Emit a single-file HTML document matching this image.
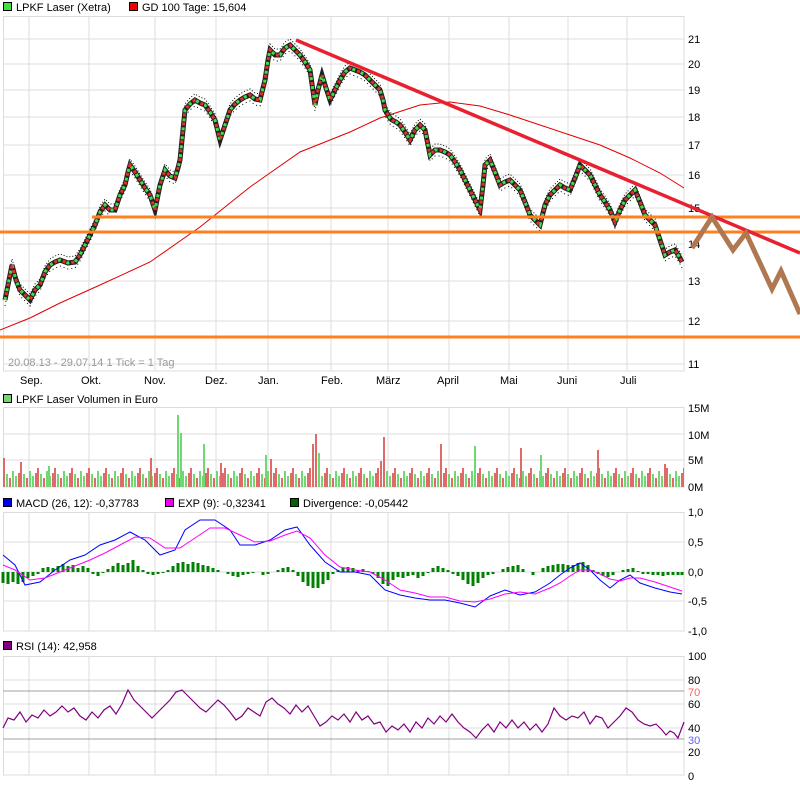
<!DOCTYPE html>
<html><head><meta charset="utf-8"><style>
body{margin:0;background:#fff;width:800px;height:784px;overflow:hidden;font-family:"Liberation Sans",sans-serif;}
svg text{font-family:"Liberation Sans",sans-serif;font-size:11px;fill:#000}
</style></head><body>
<svg width="800" height="784" xmlns="http://www.w3.org/2000/svg">
<defs>
<pattern id="vol" x="3" y="0" width="17" height="487" patternUnits="userSpaceOnUse">
<rect x="0" y="468" width="2" height="19" fill="#e06a6a"/>
<rect x="3" y="474" width="2" height="13" fill="#70d870"/>
<rect x="6" y="478" width="2" height="9" fill="#e06a6a"/>
<rect x="9" y="471" width="2" height="16" fill="#70d870"/>
<rect x="12" y="476" width="2" height="11" fill="#70d870"/>
<rect x="15" y="473" width="2" height="14" fill="#e06a6a"/>
</pattern>
<path id="px" d="M5 300L8 285L12 265L16 280L20 290L25 295L30 300L35 290L40 285L45 272L50 265L55 262L60 260L68 263L75 262L80 255L85 245L90 235L95 225L100 212L105 205L110 210L115 210L120 195L125 185L128 172L130 165L135 172L140 180L145 188L150 195L155 210L160 185L165 170L170 176L175 178L178 168L180 160L183 130L185 110L190 104L195 100L200 103L205 105L210 112L215 120L220 140L225 125L230 110L235 104L240 100L245 97L250 95L255 99L260 100L265 80L268 60L270 50L275 55L280 55L285 48L290 45L295 50L300 55L305 62L310 70L315 105L318 90L322 75L326 88L330 100L335 90L340 80L345 72L350 68L355 70L360 72L365 75L370 80L375 85L380 90L383 100L385 110L390 118L392 120L396 122L400 125L405 132L410 140L415 130L420 125L425 130L428 145L430 155L435 150L440 150L445 152L450 155L455 162L460 170L465 180L470 190L475 200L480 210L483 185L485 165L490 160L495 172L500 185L505 182L510 180L515 185L520 190L525 202L530 215L535 220L540 225L545 205L550 195L555 190L560 185L565 188L570 190L575 178L580 165L585 170L590 175L595 185L600 195L605 202L610 210L615 222L620 210L625 200L630 195L635 190L640 202L645 215L650 220L655 225L660 240L665 255L670 252L675 250L680 258L682 262"/>
</defs>
<rect x="3.5" y="2.5" width="8" height="8" fill="#40e040" stroke="#000"/>
<text x="16" y="11">LPKF Laser (Xetra)</text>
<rect x="129.5" y="2.5" width="8" height="8" fill="#f00000" stroke="#000"/>
<text x="142" y="11">GD 100 Tage: 15,604</text>
<g stroke="#dcdcdc" stroke-width="1">
<path d="M29 16V371M89 16V371M155 16V371M216 16V371M268 16V371M331 16V371M388 16V371M449 16V371M509 16V371M568 16V371M627 16V371"/>
<path d="M3 39H684M3 64H684M3 90H684M3 117H684M3 145H684M3 175H684M3 208H684M3 244H684M3 281H684M3 321H684M3 364H684"/>
</g>
<rect x="3.5" y="16.5" width="680.5" height="354.5" fill="none" stroke="#dcdcdc"/>
<g>
<text x="688" y="43">21</text><text x="688" y="68">20</text><text x="688" y="94">19</text><text x="688" y="121">18</text><text x="688" y="149">17</text><text x="688" y="179">16</text><text x="688" y="212">15</text><text x="688" y="248">14</text><text x="688" y="285">13</text><text x="688" y="325">12</text><text x="688" y="368">11</text>
</g>
<text x="8" y="366" style="fill:#999">20.08.13 - 29.07.14   1 Tick = 1 Tag</text>
<g>
<text x="20" y="384">Sep.</text><text x="81" y="384">Okt.</text><text x="144" y="384">Nov.</text><text x="205" y="384">Dez.</text><text x="258" y="384">Jan.</text><text x="321" y="384">Feb.</text><text x="376" y="384">März</text><text x="437" y="384">April</text><text x="500" y="384">Mai</text><text x="557" y="384">Juni</text><text x="620" y="384">Juli</text>
</g>
<path d="M0 330L30 318L60 303L100 285L150 262L200 227L250 187L300 152L350 132L380 118L420 105L450 102L480 106L510 115L540 125L570 135L600 145L630 158L660 173L684 188" fill="none" stroke="#e00000" stroke-width="1"/>
<use href="#px" fill="none" stroke="#000" stroke-width="1" transform="translate(0,-6)" stroke-dasharray="1 2"/>
<use href="#px" fill="none" stroke="#000" stroke-width="1" transform="translate(0,6)" stroke-dasharray="1 3"/>
<use href="#px" fill="none" stroke="#222" stroke-width="5"/>
<use href="#px" fill="none" stroke="#40e040" stroke-width="3" stroke-dasharray="3 6"/>
<use href="#px" fill="none" stroke="#e03030" stroke-width="3" stroke-dasharray="3 6" stroke-dashoffset="4"/>
<path d="M92 217H800" stroke="#ff8020" stroke-width="3"/>
<path d="M0 232H800" stroke="#ff8020" stroke-width="3"/>
<path d="M0 337H800" stroke="#ff8020" stroke-width="3"/>
<path d="M296 40L800 253" stroke="#e82030" stroke-width="3.5"/>
<path d="M692 248L712 217L733 250L746 233L772 289L781 271L800 314" fill="none" stroke="#b07850" stroke-width="5"/>
<rect x="3.5" y="394.5" width="8" height="8" fill="#70d870" stroke="#000"/>
<text x="16" y="403">LPKF Laser Volumen in Euro</text>
<g stroke="#dcdcdc"><path d="M29 407V487M89 407V487M155 407V487M216 407V487M268 407V487M331 407V487M388 407V487M449 407V487M509 407V487M568 407V487M627 407V487M3 434H684M3 460H684"/></g>
<rect x="3.5" y="407.5" width="680.5" height="79.5" fill="none" stroke="#dcdcdc"/>
<rect x="3" y="407" width="681" height="80" fill="url(#vol)"/>
<g>
<rect x="3" y="458" width="2" height="29" fill="#e06a6a"/><rect x="20" y="462" width="2" height="25" fill="#e06a6a"/><rect x="48" y="466" width="2" height="21" fill="#70d870"/>
<rect x="177" y="415" width="2" height="72" fill="#70d870"/><rect x="180" y="433" width="2" height="54" fill="#70d870"/><rect x="203" y="444" width="2" height="43" fill="#70d870"/>
<rect x="150" y="458" width="2" height="29" fill="#e06a6a"/><rect x="220" y="463" width="2" height="24" fill="#e06a6a"/>
<rect x="312" y="444" width="2" height="43" fill="#e06a6a"/><rect x="315" y="434" width="2" height="53" fill="#e06a6a"/><rect x="318" y="453" width="2" height="34" fill="#70d870"/>
<rect x="383" y="437" width="2" height="50" fill="#e06a6a"/><rect x="380" y="461" width="2" height="26" fill="#e06a6a"/>
<rect x="265" y="455" width="2" height="32" fill="#70d870"/><rect x="270" y="459" width="2" height="28" fill="#e06a6a"/>
<rect x="440" y="444" width="2" height="43" fill="#e06a6a"/><rect x="474" y="446" width="2" height="41" fill="#70d870"/><rect x="520" y="448" width="2" height="39" fill="#e06a6a"/><rect x="540" y="455" width="2" height="32" fill="#70d870"/><rect x="597" y="450" width="2" height="37" fill="#e06a6a"/><rect x="664" y="464" width="2" height="23" fill="#e06a6a"/>
</g>
<text x="688" y="412">15M</text><text x="688" y="439">10M</text><text x="688" y="464">5M</text><text x="688" y="491">0M</text>
<rect x="3.5" y="498.5" width="8" height="8" fill="#0000f0" stroke="#000"/><text x="16" y="507">MACD (26, 12): -0,37783</text>
<rect x="165.5" y="498.5" width="8" height="8" fill="#f000f0" stroke="#000"/><text x="178" y="507">EXP (9): -0,32341</text>
<rect x="290.5" y="498.5" width="8" height="8" fill="#006400" stroke="#000"/><text x="303" y="507">Divergence: -0,05442</text>
<g stroke="#dcdcdc"><path d="M29 512V631M89 512V631M155 512V631M216 512V631M268 512V631M331 512V631M388 512V631M449 512V631M509 512V631M568 512V631M627 512V631M3 542H684M3 572H684M3 601H684"/></g>
<rect x="3.5" y="512.5" width="680.5" height="118.5" fill="none" stroke="#dcdcdc"/>
<path d="M3 572V583M8 572V584M13 572V582M18 572V584M23 572V582M28 572V578M33 572V576M38 572V574M43 572V568M48 572V567M53 572V568M58 572V566M63 572V564M68 572V566M73 572V565M78 572V568M83 572V566M88 572V568M93 572V574M98 572V576M103 572V573M108 572V569M113 572V566M118 572V563M123 572V565M128 572V563M133 572V560M138 572V566M143 572V570M148 572V574M153 572V575M158 572V574M163 572V573M168 572V570M173 572V566M178 572V563M183 572V562M188 572V564M193 572V562M198 572V563M203 572V565M208 572V566M213 572V568M218 572V570M223 572V572M228 572V574M233 572V576M238 572V577M243 572V575M248 572V574M253 572V573M258 572V572M263 572V575M268 572V574M273 572V572M278 572V570M283 572V568M288 572V567M293 572V570M298 572V576M303 572V582M308 572V586M313 572V588M318 572V588M323 572V584M328 572V580M333 572V574M338 572V570M343 572V568M348 572V567M353 572V568M358 572V570M363 572V569M368 572V571M373 572V574M378 572V578M383 572V584M388 572V586M393 572V580M398 572V577M403 572V578M408 572V576M413 572V575M418 572V578M423 572V576M428 572V573M433 572V568M438 572V566M443 572V568M448 572V570M453 572V574M458 572V576M463 572V580M468 572V584M473 572V586M478 572V583M483 572V578M488 572V575M493 572V574M498 572V572M503 572V569M508 572V567M513 572V566M518 572V565M523 572V569M528 572V572M533 572V575M538 572V572M543 572V568M548 572V566M553 572V565M558 572V564M563 572V564M568 572V565M573 572V565M578 572V563M583 572V562M588 572V565M593 572V570M598 572V574M603 572V576M608 572V577M613 572V575M618 572V572M623 572V570M628 572V569M633 572V568M638 572V571M643 572V574M648 572V574M653 572V575M658 572V575M663 572V576M668 572V575M673 572V575M678 572V575M682 572V575" stroke="#008000" stroke-width="3"/>
<path d="M3 555L15 565L25 585L40 582L55 570L70 560L85 555L100 545L115 540L130 532L145 540L160 555L175 550L185 530L200 520L215 520L230 530L240 545L255 545L270 540L285 530L297 527L310 545L325 562L340 572L355 572L370 575L385 590L400 595L415 598L430 600L445 600L460 603L475 607L490 596L505 590L520 595L535 592L550 583L560 575L570 568L580 563L590 570L600 580L610 588L620 580L630 575L640 583L655 588L670 592L682 594" fill="none" stroke="#0000ff" stroke-width="1"/>
<path d="M3 565L15 570L30 580L45 578L60 572L75 566L90 560L105 553L120 545L135 537L150 538L165 548L180 548L195 538L210 528L225 528L240 535L255 542L270 541L285 535L297 531L310 538L325 555L340 567L355 570L370 572L385 580L400 590L415 593L430 597L445 597L460 601L475 602L490 599L505 594L520 592L535 594L550 588L560 583L570 576L580 570L590 570L600 574L610 579L620 581L630 578L640 578L655 582L670 587L682 591" fill="none" stroke="#ff00ff" stroke-width="1"/>
<text x="688" y="516">1,0</text><text x="688" y="546">0,5</text><text x="688" y="576">0,0</text><text x="688" y="605">-0,5</text><text x="688" y="635">-1,0</text>
<rect x="3.5" y="641.5" width="8" height="8" fill="#800080" stroke="#000"/><text x="16" y="650">RSI (14): 42,958</text>
<g stroke="#dcdcdc"><path d="M29 656V775M89 656V775M155 656V775M216 656V775M268 656V775M331 656V775M388 656V775M449 656V775M509 656V775M568 656V775M627 656V775M3 680H684M3 704H684M3 728H684M3 752H684"/></g>
<rect x="3.5" y="656.5" width="680.5" height="118.5" fill="none" stroke="#dcdcdc"/>
<path d="M3 691H684" stroke="#a0a0a0"/><path d="M3 739H684" stroke="#a0a0a0"/>
<path d="M3 728L8 718L14 720L20 712L26 722L32 715L38 718L44 710L50 716L56 712L62 706L68 712L74 708L80 716L86 720L92 712L98 718L104 710L110 706L116 714L122 704L128 690L134 700L140 706L146 712L152 718L158 712L164 706L170 700L176 692L182 690L188 696L194 702L200 708L206 712L212 706L218 700L224 705L230 712L236 720L242 716L248 708L254 712L260 716L266 702L272 698L278 704L284 708L290 714L296 705L302 712L308 706L314 716L320 726L326 722L332 716L338 720L344 714L350 722L356 712L362 720L368 716L374 724L380 722L386 732L392 726L398 730L404 724L410 732L416 722L422 728L428 718L434 724L440 716L446 722L452 714L458 722L464 728L470 732L476 738L482 730L488 724L494 732L500 722L506 728L512 720L518 728L524 722L530 730L536 724L542 732L548 724L554 708L560 716L566 720L572 716L578 718L584 712L590 724L596 716L602 718L608 728L614 722L620 716L626 708L632 712L638 720L644 724L650 726L656 724L662 730L666 735L670 731L674 733L678 738L684 722" fill="none" stroke="#800080" stroke-width="1.2"/>
<text x="688" y="660">100</text><text x="688" y="684">80</text><text x="688" y="696" style="fill:#ff6060">70</text><text x="688" y="708">60</text><text x="688" y="732">40</text><text x="688" y="744" style="fill:#6060ff">30</text><text x="688" y="756">20</text><text x="688" y="780">0</text>
</svg>
</body></html>
